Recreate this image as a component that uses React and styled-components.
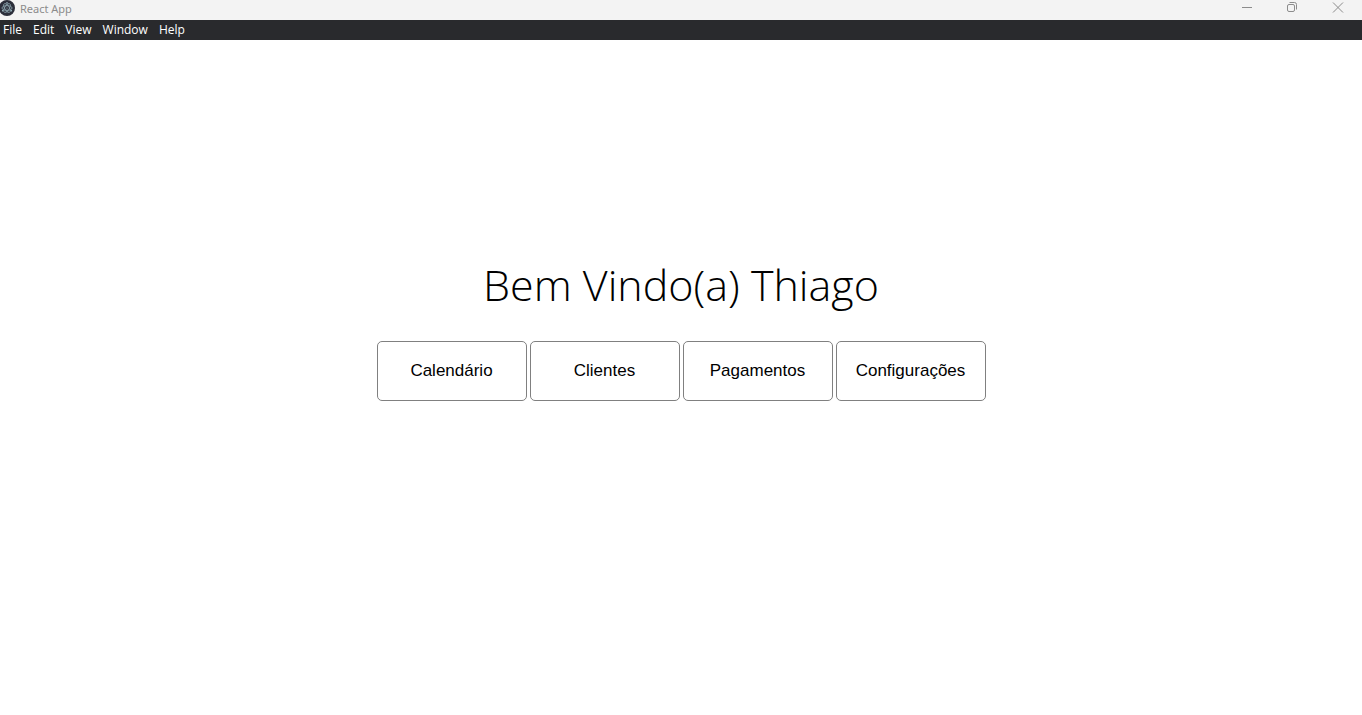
import React from "react";
import styled, { createGlobalStyle } from "styled-components";

const GlobalStyle = createGlobalStyle`
  *, *::before, *::after { box-sizing: border-box; }
  body { margin: 0; background: #ffffff; }
`;

const Window = styled.div`
  min-height: 100vh;
  display: flex;
  flex-direction: column;
`;

const TitleBar = styled.header`
  display: flex;
  align-items: flex-start;
  justify-content: space-between;
  height: 20px;
  background: #f3f3f3;
  color: #8c8c8c;
  font-family: "Noto Sans", "Open Sans", sans-serif;
`;

const AppTitle = styled.div`
  display: flex;
  align-items: flex-start;
  gap: 5px;
  font-size: 11px;
  line-height: 18px;
`;

const WindowControls = styled.div`
  display: flex;
  padding-right: 1px;
`;

const ControlButton = styled.button`
  display: flex;
  align-items: flex-start;
  justify-content: center;
  width: 46px;
  height: 20px;
  padding: 0;
  border: 0;
  background: transparent;
  color: inherit;
`;

const MenuBar = styled.nav`
  display: flex;
  height: 20px;
  padding-left: 3px;
  gap: 11px;
  background: #292a2d;
`;

const MenuButton = styled.button`
  padding: 0;
  border: 0;
  background: transparent;
  color: #ffffff;
  font-family: "Open Sans", "Noto Sans", sans-serif;
  font-size: 12px;
  line-height: 20px;
`;

const Main = styled.main`
  flex: 1;
  display: flex;
  flex-direction: column;
  align-items: center;
  justify-content: center;
  gap: 24px;
  padding-bottom: 102px;
`;

const Welcome = styled.h1`
  margin: 0;
  color: #000000;
  font-family: "Open Sans", "Noto Sans", sans-serif;
  font-size: 43px;
  font-weight: 300;
  line-height: 64px;
`;

const Actions = styled.div`
  display: flex;
  flex-wrap: wrap;
  justify-content: center;
  gap: 3px;
`;

const ActionButton = styled.button`
  width: 150px;
  height: 60px;
  padding: 0;
  border: 1px solid #808080;
  border-radius: 5px;
  background: #ffffff;
  color: #000000;
  font-family: "Liberation Sans", Arial, sans-serif;
  font-size: 17px;
`;

const AppIcon = () => (
  <svg width="15" height="16" viewBox="0 0 15 16" aria-hidden="true">
    <circle cx="7" cy="8" r="8" fill="#2b2e3a" />
    <g fill="none" stroke="#a5c3cc" strokeWidth="0.7" opacity="0.9">
      <ellipse cx="7" cy="8" rx="5" ry="2.3" />
      <ellipse cx="7" cy="8" rx="5" ry="2.3" transform="rotate(60 7 8)" />
      <ellipse cx="7" cy="8" rx="5" ry="2.3" transform="rotate(120 7 8)" />
    </g>
    <g fill="#a5c3cc">
      <circle cx="7" cy="8" r="0.6" />
      <circle cx="7" cy="2.7" r="0.7" />
      <circle cx="2.6" cy="10.8" r="0.7" />
      <circle cx="11.4" cy="10.8" r="0.7" />
    </g>
  </svg>
);

const glyphs = {
  Minimize: <path d="M4 7.5h10" />,
  Restore: (
    <>
      <rect x="3.5" y="4.5" width="7" height="7" rx="1.5" />
      <path d="M5.5 2.5h5a2 2 0 0 1 2 2v5" />
    </>
  ),
  Close: <path d="M3 2.5l10 10M13 2.5l-10 10" />,
};

const menus = ["File", "Edit", "View", "Window", "Help"];
const actions = ["Calendário", "Clientes", "Pagamentos", "Configurações"];

export default function App() {
  return (
    <Window>
      <GlobalStyle />
      <TitleBar>
        <AppTitle>
          <AppIcon />
          <span>React App</span>
        </AppTitle>
        <WindowControls>
          {Object.entries(glyphs).map(([name, glyph]) => (
            <ControlButton key={name} type="button" aria-label={name}>
              <svg width="16" height="16" viewBox="0 0 16 16" fill="none" stroke="currentColor">
                {glyph}
              </svg>
            </ControlButton>
          ))}
        </WindowControls>
      </TitleBar>
      <MenuBar aria-label="Application menu">
        {menus.map((menu) => (
          <MenuButton key={menu} type="button">{menu}</MenuButton>
        ))}
      </MenuBar>
      <Main>
        <Welcome>Bem Vindo(a) Thiago</Welcome>
        <Actions>
          {actions.map((action) => (
            <ActionButton key={action} type="button">{action}</ActionButton>
          ))}
        </Actions>
      </Main>
    </Window>
  );
}
